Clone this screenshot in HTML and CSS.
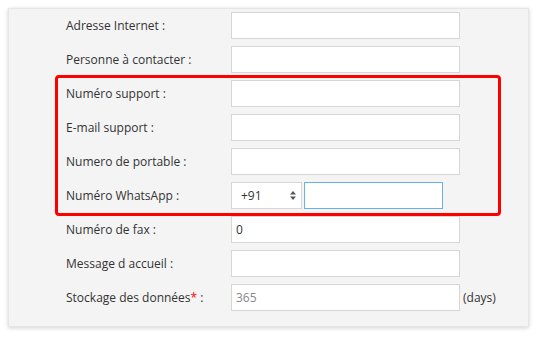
FILE: index.html
```html
<!DOCTYPE html>
<html lang="fr">
<head>
<meta charset="UTF-8">
<title>Paramètres du contact</title>
<link rel="stylesheet" href="styles.css">
</head>
<body>

<div class="panel">
  <!-- highlight around the support fields -->
  <div class="highlight"></div>

  <div class="row">
    <label class="row-label">Adresse Internet :</label>
    <input type="text" class="field">
  </div>
  <div class="row">
    <label class="row-label">Personne à contacter :</label>
    <input type="text" class="field">
  </div>
  <div class="row">
    <label class="row-label">Numéro support :</label>
    <input type="text" class="field">
  </div>
  <div class="row">
    <label class="row-label">E-mail support :</label>
    <input type="text" class="field">
  </div>
  <div class="row">
    <label class="row-label">Numero de portable :</label>
    <input type="text" class="field">
  </div>
  <div class="row">
    <label class="row-label">Numéro WhatsApp :</label>
    <div class="phone">
      <div class="country">
        <span>+91</span>
        <svg class="arrows" width="6" height="9" viewBox="0 0 6 9"><path d="M3 0L6 3.5H0Z M3 9L0 5.5H6Z" fill="#555"/></svg>
      </div>
      <input type="text" class="field phone-number">
    </div>
  </div>
  <div class="row">
    <label class="row-label">Numéro de fax :</label>
    <input type="text" class="field" value="0">
  </div>
  <div class="row">
    <label class="row-label">Message d accueil :</label>
    <input type="text" class="field">
  </div>
  <div class="row">
    <label class="row-label">Stockage des données<span class="required">*</span> :</label>
    <input type="text" class="field" placeholder="365">
    <span class="unit">(days)</span>
  </div>
</div>

</body>
</html>
```

FILE: styles.css
```css
body {
  margin: 0;
  padding: 8px;
  background: #ffffff;
  font-family: "Open Sans", sans-serif;
  font-size: 12px;
  color: #333;
}

.panel {
  position: relative;
  width: 521px;
  height: 319px;
  box-sizing: border-box;
  background: #f4f4f4;
  border: 1px solid #e6e6e6;
  box-shadow: 0 1px 4px rgba(0, 0, 0, 0.18);
  padding: 3px 0 0 57px;
  display: flex;
  flex-direction: column;
  gap: 7px;
}

.row {
  display: grid;
  grid-template-columns: 165px 229px auto;
  align-items: center;
  height: 27px;
}

.row-label {
  color: #333;
}

.required {
  color: #f00;
}

.field {
  box-sizing: border-box;
  width: 229px;
  height: 27px;
  margin: 0;
  padding: 0 4px;
  border: 1px solid #d6d6d6;
  background: #fff;
  font-family: "Open Sans", sans-serif;
  font-size: 12px;
  color: #333;
  outline: none;
}

.field::placeholder {
  color: #888;
}

.unit {
  padding-left: 3px;
}

.phone {
  display: flex;
  gap: 2px;
  align-items: center;
}

.country {
  box-sizing: border-box;
  width: 71px;
  height: 27px;
  border: 1px solid #d6d6d6;
  background: #fff;
  display: flex;
  align-items: center;
  justify-content: space-between;
  padding: 0 5px 0 9px;
}

.phone-number {
  width: 139px;
  border-color: #66b3ea;
}

.highlight {
  position: absolute;
  left: 46px;
  top: 66px;
  width: 446px;
  height: 141px;
  box-sizing: border-box;
  border: 3px solid #ff0000;
  border-radius: 4px;
  pointer-events: none;
}
```
